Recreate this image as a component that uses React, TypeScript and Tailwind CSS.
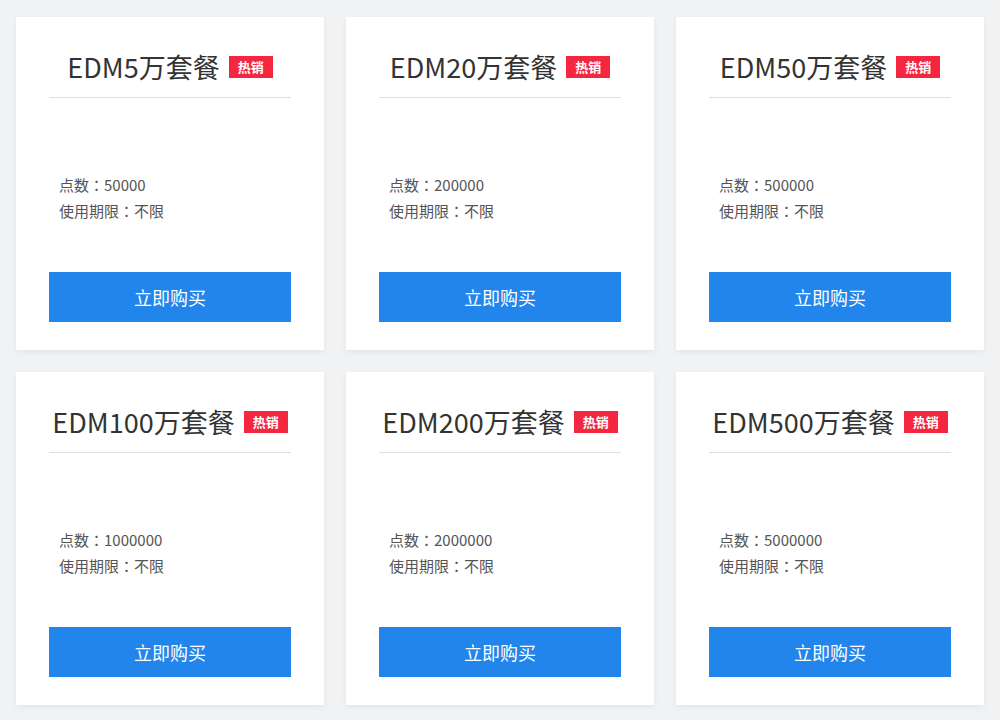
import React from 'react';

type Plan = {
  name: string;
  points: string;
};

const plans: Plan[] = [
  { name: 'EDM5万套餐', points: '50000' },
  { name: 'EDM20万套餐', points: '200000' },
  { name: 'EDM50万套餐', points: '500000' },
  { name: 'EDM100万套餐', points: '1000000' },
  { name: 'EDM200万套餐', points: '2000000' },
  { name: 'EDM500万套餐', points: '5000000' },
];

function PlanCard({ plan }: { plan: Plan }) {
  return (
    <div className="bg-white w-[308px] h-[333px] px-[33px] pt-[30px] pb-[28px] flex flex-col shadow-[0_2px_6px_rgba(0,0,0,0.06)]">
      <div className="flex items-center justify-center h-[40px] mb-[10px]">
        <span className="text-[27px] leading-[40px] text-[#333]">{plan.name}</span>
        <span className="ml-[9px] bg-[#f5263f] text-white text-[13px] font-bold w-[44px] h-[22px] leading-[22px] text-center">
          热销
        </span>
      </div>
      <div className="border-t border-[#dedede]" />
      <div
        className="mt-[74px] pl-[10px] text-[15px] leading-[26px] text-[#555]"
        style={{ fontFamily: '"Noto Sans CJK JP", "Noto Sans CJK SC", sans-serif' }}
      >
        <p>点数：{plan.points}</p>
        <p>使用期限：不限</p>
      </div>
      <button className="mt-auto h-[50px] w-full bg-[#2185eb] text-white text-[18px]">
        立即购买
      </button>
    </div>
  );
}

export default function App() {
  return (
    <div
      className="min-h-screen bg-[#f1f2f4] pl-[16px] pt-[17px]"
      style={{ fontFamily: '"Noto Sans CJK SC", "Noto Sans", sans-serif' }}
    >
      <div className="grid grid-cols-[308px_308px_308px] gap-[22px]">
        {plans.map((plan) => (
          <PlanCard key={plan.name} plan={plan} />
        ))}
      </div>
    </div>
  );
}
